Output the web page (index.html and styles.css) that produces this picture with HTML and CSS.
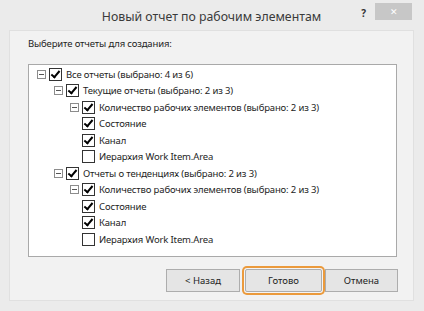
FILE: index.html
```html
<!DOCTYPE html>
<html lang="ru">
<head>
    <meta charset="UTF-8">
    <title>Новый отчет по рабочим элементам</title>
    <link rel="stylesheet" href="styles.css">
</head>
<body>
    <div class="window">
        <div class="titlebar">
            <div></div>
            <div class="title">Новый отчет по рабочим элементам</div>
            <div class="controls">
                <span class="help">?</span>
                <span class="close">&#x2715;</span>
            </div>
        </div>

        <div class="panel">
            <div class="prompt">Выберите отчеты для создания:</div>

            <div class="tree">
                <div class="row lvl0"><span class="exp"></span><span class="cb on"></span>Все отчеты (выбрано: 4 из 6)</div>
                <div class="row lvl1"><span class="exp"></span><span class="cb on"></span>Текущие отчеты (выбрано: 2 из 3)</div>
                <div class="row lvl2"><span class="exp"></span><span class="cb on"></span>Количество рабочих элементов (выбрано: 2 из 3)</div>
                <div class="row lvl3"><span class="cb on"></span>Состояние</div>
                <div class="row lvl3"><span class="cb on"></span>Канал</div>
                <div class="row lvl3"><span class="cb"></span>Иерархия Work Item.Area</div>
                <div class="row lvl1"><span class="exp"></span><span class="cb on"></span>Отчеты о тенденциях (выбрано: 2 из 3)</div>
                <div class="row lvl2"><span class="exp"></span><span class="cb on"></span>Количество рабочих элементов (выбрано: 2 из 3)</div>
                <div class="row lvl3"><span class="cb on"></span>Состояние</div>
                <div class="row lvl3"><span class="cb on"></span>Канал</div>
                <div class="row lvl3"><span class="cb"></span>Иерархия Work Item.Area</div>
            </div>

            <div class="buttons">
                <button class="btn back">&lt; Назад</button>
                <button class="btn done">Готово</button>
                <button class="btn cancel">Отмена</button>
            </div>
        </div>
    </div>
</body>
</html>
```

FILE: styles.css
```css
:root {
    --frame: #ebebeb;
    --panel: #f2f2f2;
    --text: #1e1e1e;
    --focus: #eb9a3c;
}

body {
    margin: 0;
    background: var(--frame);
    font-family: 'Noto Sans', 'Open Sans', sans-serif;
    color: var(--text);
}

.window {
    width: 424px;
    height: 311px;
    box-sizing: border-box;
    padding: 0 10px 0 9px;
}

.titlebar {
    height: 30px;
    display: grid;
    grid-template-columns: 1fr auto 1fr;
    align-items: start;
}

.title {
    font-size: 12.3px;
    color: #3a3a3a;
    line-height: 20px;
    padding-top: 7px;
}

.controls {
    display: flex;
    justify-content: flex-end;
    align-items: flex-start;
    padding-top: 3px;
    margin-right: 2px;
}

.help {
    font-size: 10px;
    font-weight: bold;
    color: #333;
    margin-top: 3px;
    margin-right: 9px;
}

.close {
    width: 37px;
    height: 17px;
    background: #c7c7c7;
    color: #fff;
    font-size: 9px;
    line-height: 17px;
    text-align: center;
}

.panel {
    background: var(--panel);
    border: 1px solid #e0e0e0;
    height: 271px;
    box-sizing: border-box;
    padding: 6px 16px 0 18px;
}

.prompt {
    font-size: 9.5px;
    letter-spacing: -0.15px;
    line-height: 14px;
    margin-bottom: 13px;
}

.tree {
    background: #fff;
    border: 1px solid #a9a9a9;
    height: 193px;
    box-sizing: border-box;
    padding-top: 1px;
}

.row {
    height: 16.5px;
    display: flex;
    align-items: center;
    font-size: 9.5px;
    letter-spacing: -0.15px;
    white-space: nowrap;
}

.lvl0 { padding-left: 8px; }
.lvl1 { padding-left: 25px; }
.lvl2 { padding-left: 41px; }
.lvl3 { padding-left: 53px; }

.exp {
    width: 7px;
    height: 7px;
    border: 1px solid #8c8c8c;
    margin-right: 3px;
    position: relative;
}

.exp::after {
    content: '';
    position: absolute;
    left: 1px;
    right: 1px;
    top: 3px;
    height: 1px;
    background: #555;
}

.cb {
    width: 11px;
    height: 11px;
    border: 1px solid #333;
    background: #fff;
    margin-right: 4px;
    position: relative;
    flex-shrink: 0;
}

.cb.on::after {
    content: '';
    position: absolute;
    left: 3px;
    top: 0px;
    width: 3px;
    height: 7px;
    border: solid #000;
    border-width: 0 2px 2px 0;
    transform: rotate(40deg);
}

.buttons {
    display: flex;
    justify-content: flex-end;
    margin: 12px -1px 0 0;
}

.btn {
    height: 23px;
    border: 1px solid #adadad;
    background: #e5e5e5;
    font-family: 'Noto Sans', 'Open Sans', sans-serif;
    font-size: 9.5px;
    color: var(--text);
    padding: 0;
}

.back { width: 74px; }
.done {
    width: 77px;
    margin-left: 5px;
    border-radius: 2px;
    box-shadow: 0 0 0 1px #f4f4f4, 0 0 0 3px var(--focus);
}
.cancel { width: 73px; margin-left: 3px; }
```
